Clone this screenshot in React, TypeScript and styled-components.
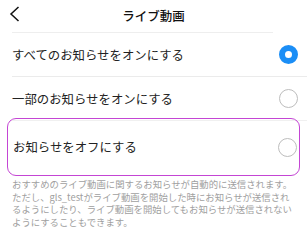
import styled, { createGlobalStyle } from 'styled-components';

const options = [
  { id: 'all', label: 'すべてのお知らせをオンにする' },
  { id: 'some', label: '一部のお知らせをオンにする' },
  { id: 'off', label: 'お知らせをオフにする' },
];

export default function App() {
  const selected = 'all';
  const highlighted = 'off';

  return (
    <>
      <GlobalStyle />
      <Screen>
        <Header>
          <BackButton aria-label="戻る">
            <svg width="12" height="16" viewBox="0 0 12 16">
              <path d="M9.5 1 L2 8 L9.5 15" fill="none" stroke="#111" strokeWidth="1.5" />
            </svg>
          </BackButton>
          <Title>ライブ動画</Title>
          <span />
        </Header>
        <ul>
          {options.map((option) => (
            <Row key={option.id} $highlight={option.id === highlighted}>
              <Label>{option.label}</Label>
              <Radio $checked={option.id === selected} />
            </Row>
          ))}
        </ul>
        <Note>
          おすすめのライブ動画に関するお知らせが自動的に送信されます。
          <br />
          ただし、gls_testがライブ動画を開始した時にお知らせが送信され
          <br />
          るようにしたり、ライブ動画を開始してもお知らせが送信されない
          <br />
          ようにすることもできます。
        </Note>
      </Screen>
    </>
  );
}

const GlobalStyle = createGlobalStyle`
  * {
    box-sizing: border-box;
  }
  body {
    margin: 0;
    background: #fff;
    font-family: "Noto Sans CJK JP", "Noto Sans", sans-serif;
  }
  ul {
    margin: 0;
    padding: 0;
    list-style: none;
  }
`;

const Screen = styled.div`
  width: 307px;
  height: 230px;
  overflow: hidden;
  background: #fff;
`;

const Header = styled.header`
  display: grid;
  grid-template-columns: 40px 1fr 40px;
  align-items: center;
  height: 33px;
  margin-left: 12px;
  margin-right: 34px;
  border-bottom: 1px solid #eeeeee;
`;

const BackButton = styled.button`
  display: flex;
  align-items: center;
  margin-left: -3px;
  margin-top: -4px;
  padding: 0;
  border: none;
  background: none;
`;

const Title = styled.h1`
  margin: 0;
  text-align: center;
  font-size: 12.5px;
  font-weight: 500;
  color: #111;
  padding-left: 22px;
  margin-top: -2px;
`;

const Row = styled.li<{ $highlight?: boolean }>`
  display: flex;
  align-items: center;
  justify-content: space-between;
  height: ${({ $highlight }) => ($highlight ? '58px' : '44px')};
  margin: ${({ $highlight }) => ($highlight ? '-3px 7px 0' : '0 0 0 12px')};
  padding: ${({ $highlight }) => ($highlight ? '0 2px 0 5px' : '0 9px 0 0')};
  border-bottom: ${({ $highlight }) => ($highlight ? 'none' : '1px solid #f0f0f0')};
  border: ${({ $highlight }) => ($highlight ? '1.5px solid #c445d4' : undefined)};
  border-radius: ${({ $highlight }) => ($highlight ? '9px' : '0')};

  &:first-child {
    border-bottom-color: #ebebeb;
  }
`;

const Label = styled.span`
  font-size: 12.4px;
  color: #222;
`;

const Radio = styled.span<{ $checked?: boolean }>`
  width: 19px;
  height: 19px;
  border-radius: 50%;
  border: ${({ $checked }) => ($checked ? '6.5px solid #1b8ef6' : '1px solid #bdbdbd')};
  background: #fff;
`;

const Note = styled.p`
  margin: 2px 0 0;
  padding: 0 12px;
  font-size: 9.4px;
  line-height: 12.7px;
  color: #a0a0a0;
  white-space: nowrap;
`;
